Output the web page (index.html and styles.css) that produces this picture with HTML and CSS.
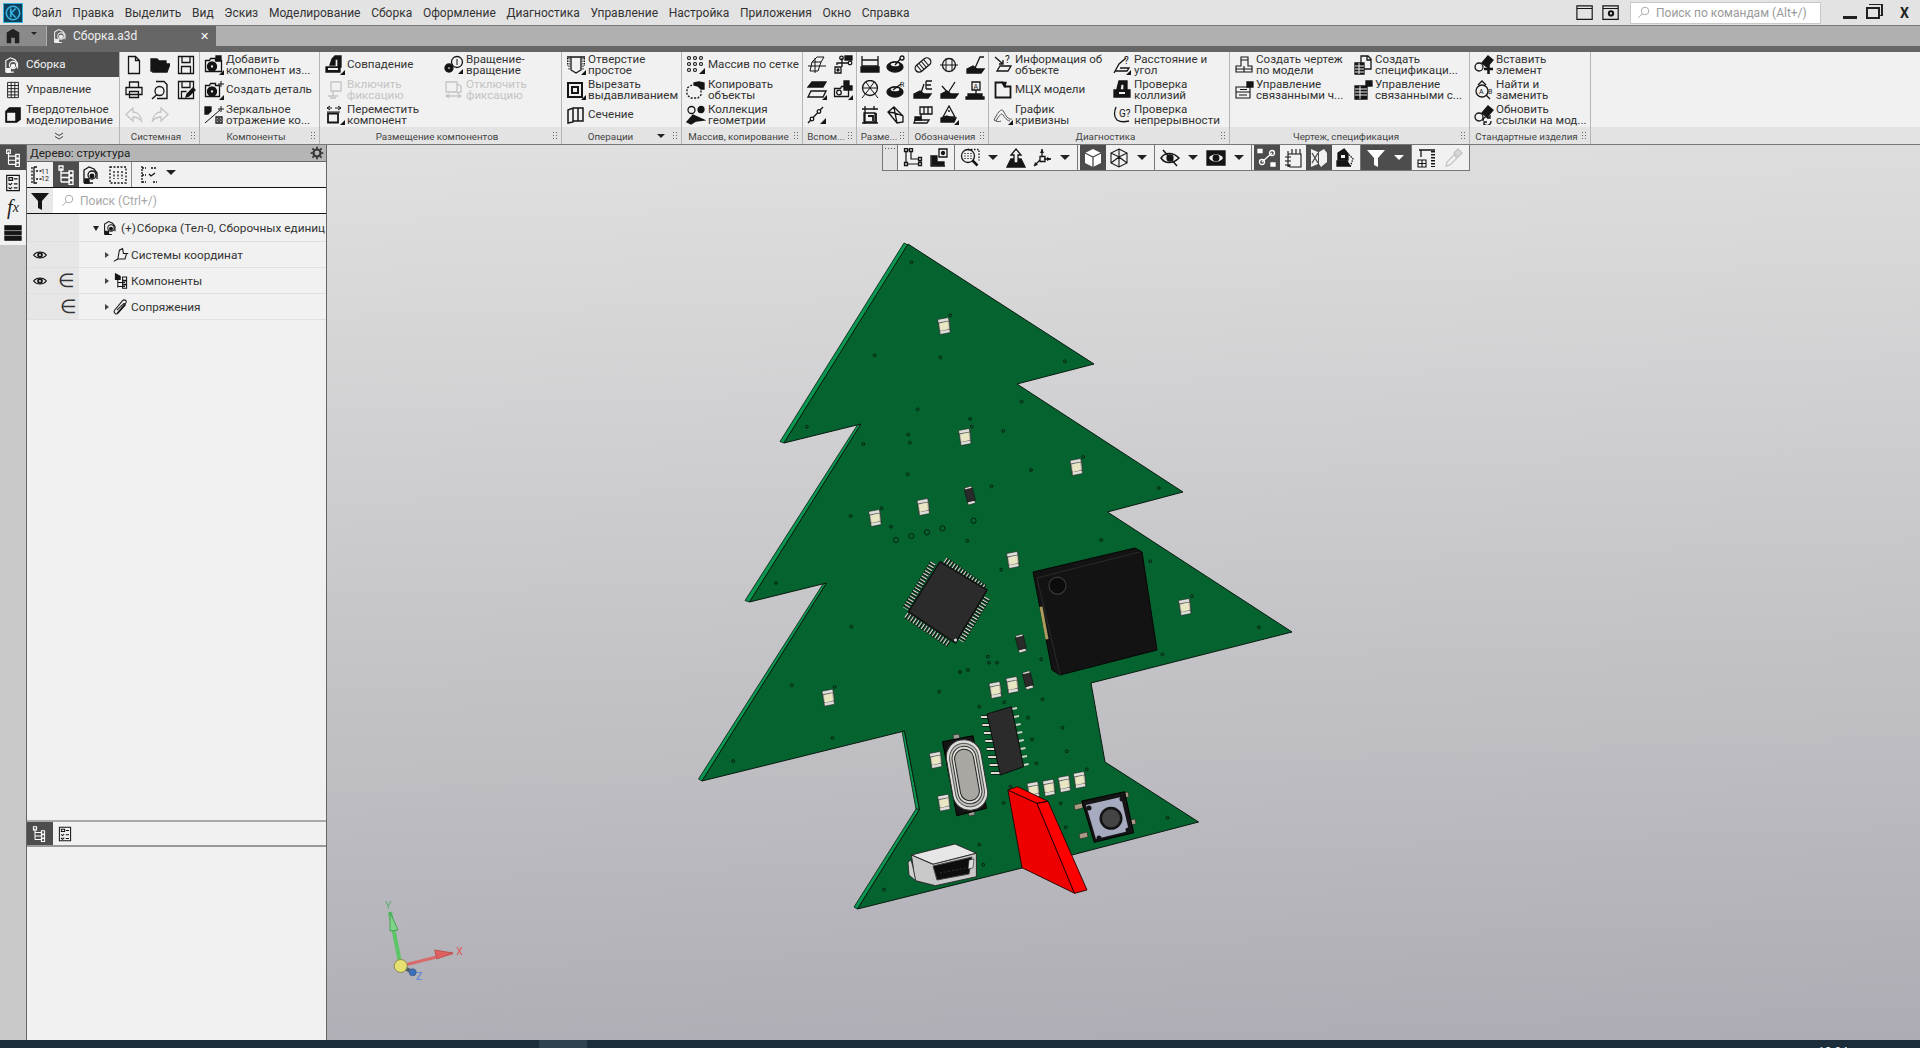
FILE: index.html
```html
<!DOCTYPE html>
<html lang="ru">
<head>
  <meta charset="UTF-8">
  <title>Сборка.a3d</title>
  <link rel="stylesheet" href="styles.css">
</head>
<body>
  <svg class="sprite" width="0" height="0">
    <symbol id="i-new" viewBox="0 0 20 20"><path d="M4.5 1.5h7l4 4v13h-11zM11.5 1.5v4h4"/></symbol>
    <symbol id="i-open" viewBox="0 0 20 20"><path class="f" d="M1 4h6l2 2h7v2H6l-3 8H1zM6 9h14l-3 8H3z"/></symbol>
    <symbol id="i-save" viewBox="0 0 20 20"><path d="M2.5 1.5h15v17h-15zM6 1.5v6h8v-6M5.5 18.5v-7h9v7"/></symbol>
    <symbol id="i-print" viewBox="0 0 20 20"><path d="M5.500 7V2h9v5M2 7.500h16v7H2zM5.500 11.500h9v6h-9z"/></symbol>
    <symbol id="i-preview" viewBox="0 0 20 20"><path d="M6 1.500h8l3 3v14H7M2 19l5-4.500" stroke-width="1.400"/><circle cx="9.500" cy="11" r="4.500"/></symbol>
    <symbol id="i-saveas" viewBox="0 0 20 20"><path d="M2.500 1.500h15v17h-15zM6 1.500v6h8v-6M5.500 18.500v-7h5"/><path class="f" d="M10 17l1-3 6-6 2 2-6 6z"/></symbol>
    <symbol id="i-undo" viewBox="0 0 20 20"><path class="g" d="M9 3L2 9.500 9 16v-4c4 0 6 1 8.500 4-.5-5-3.500-9-8.500-9z"/></symbol>
    <symbol id="i-redo" viewBox="0 0 20 20"><path class="g" d="M11 3l7 6.500-7 6.500v-4c-4 0-6 1-8.500 4 .5-5 3.500-9 8.500-9z"/></symbol>

    <symbol id="i-add" viewBox="0 0 20 20"><path d="M1.500 5.500h4l1-2h5v2h6v11h-16z"/><path class="f" d="M12 1h5v5h-5z"/><circle class="f" cx="8" cy="11.500" r="4.500"/><circle class="w" cx="8" cy="11.500" r="1.800"/><path class="f s" d="M15 20l5-5v5z"/></symbol>
    <symbol id="i-part" viewBox="0 0 20 20"><path d="M1.500 5.500h4l1-2h5v2h4v11h-14z"/><path class="l" d="M17 1v6M14 4h6"/><circle class="f" cx="8" cy="11.500" r="4.500"/><circle class="w" cx="8" cy="11.500" r="1.800"/><path class="f s" d="M15 20l5-5v5z"/></symbol>
    <symbol id="i-mirror" viewBox="0 0 20 20"><path class="l" d="M1 18L16 5M17 1v6M14 4h6"/><path class="f" d="M1 2h6v4l-3 3H1z"/><path d="M12 12h6v6h-6z"/><circle cx="15" cy="15" r="1.300"/></symbol>

    <symbol id="i-coin" viewBox="0 0 20 20"><path class="f" d="M7 4l3-3h6v11h-3V4h-3v6H5zM1 12h14v5H1z"/><path class="w s" d="M3 13h10v2H3z"/><path class="f s" d="M15 20l5-5v5z"/></symbol>
    <symbol id="i-fixon" viewBox="0 0 20 20"><path class="g" d="M6 2h10v9H6zM8 11v5M3 16h10M5 18h6"/></symbol>
    <symbol id="i-fixoff" viewBox="0 0 20 20"><path class="g" d="M2 2h11v10H2zM13 4l4 2v6l-4 1M2 16h15M5 14l-3 2 3 2M14 14l3 2-3 2"/></symbol>
    <symbol id="i-move" viewBox="0 0 20 20"><path class="l" d="M2 3h5M5 1L2 3l3 2M10 3h6M13 1l3 2-3 2M2 7h13"/><path d="M3 8.500h10v9H3z" stroke-width="1.800"/><path class="f s" d="M15 20l5-5v5z"/></symbol>
    <symbol id="i-rot" viewBox="0 0 20 20"><circle cx="13" cy="7" r="5.500"/><path class="l" d="M13 4v6"/><circle class="f" cx="5" cy="13" r="4"/><circle class="w" cx="5" cy="13" r="1.500"/><path class="f s" d="M14 19l5-5v5z"/></symbol>

    <symbol id="i-hole" viewBox="0 0 20 20"><path d="M1 2h18M5 2v13l5 3 5-3V2"/><path class="l" stroke-dasharray="1.500 1" d="M3 3v12M17 3v12M1.500 3v8M18.500 3v8" stroke-width="1.800"/><path class="f s" d="M15 20l5-5v5z"/></symbol>
    <symbol id="i-cut" viewBox="0 0 20 20"><path d="M2 3h14v14H2z" stroke-width="2"/><path d="M6 7h6v6H6z" stroke-width="2"/><path class="f s" d="M15 20l5-5v5z"/></symbol>
    <symbol id="i-sec" viewBox="0 0 20 20"><path d="M2 5l5-2v14l-5 1zM7 3h10v13H7M12 3v13" stroke-width="1.500"/></symbol>
    <symbol id="i-grid" viewBox="0 0 20 20"><g stroke-width="1.100"><circle cx="3" cy="3" r="1.500"/><circle cx="9" cy="3" r="1.500"/><circle cx="15" cy="3" r="1.500"/><circle cx="3" cy="9" r="1.500"/><circle cx="9" cy="9" r="1.500"/><circle cx="15" cy="9" r="1.500"/><circle cx="3" cy="15" r="1.500"/><circle cx="9" cy="15" r="1.500"/></g><path class="f s" d="M13 19l6-6v6z"/></symbol>
    <symbol id="i-copy" viewBox="0 0 20 20"><path class="f" d="M8 3l5-1 5 1v6h-3l-3-3-4-1z"/><path stroke-dasharray="2 1.500" d="M6 5l-5 3v7l4 3h7l3-3V8"/></symbol>
    <symbol id="i-coll" viewBox="0 0 20 20"><circle cx="5.500" cy="5" r="3.500"/><circle class="f" cx="15" cy="4.500" r="3"/><path class="f" d="M1 17l6-7 11 5-8 1-5 3z"/></symbol>
    <symbol id="i-cs" viewBox="0 0 20 20"><path d="M3 16l2-9h9l-3 9zM8 3v15M1 11h18M5 7l5-5h7l-3 5" stroke-width="1"/></symbol>
    <symbol id="i-pts" viewBox="0 0 20 20"><path d="M9 3v5h7M4 10V8h5M9 8v4"/><circle cx="8.500" cy="3" r="1.800"/><circle cx="17" cy="8" r="1.800"/><path class="f" d="M12 1h7v4h-7z"/><path d="M2 12h6v6H2z"/><circle class="f" cx="5" cy="15" r="1"/></symbol>
    <symbol id="i-pl2" viewBox="0 0 20 20"><path class="f" d="M5 2h14l-3 5H1z"/><path d="M4 11h15l-3 6H1z"/><path class="f s" d="M15 20l5-5v5z"/></symbol>
    <symbol id="i-cam" viewBox="0 0 20 20"><path d="M1.500 8.500h6l1-2h7v10h-14z"/><circle cx="6" cy="12.500" r="2.300"/><path class="f" d="M11 1h5v5h3v4h-8z"/><path class="f s" d="M15 20l5-5v5z"/></symbol>
    <symbol id="i-ln" viewBox="0 0 20 20"><path d="M1 18L16 2"/><circle class="w" cx="5" cy="14" r="1.800"/><circle class="w" cx="12" cy="6.500" r="1.800"/><path class="f s" d="M13 19l6-6v6z"/></symbol>

    <symbol id="i-d1" viewBox="0 0 20 20"><path d="M2 1v13M18 1v13M2 5h16M2 11h16"/><path class="f" d="M1 12h18v5H1z"/></symbol>
    <symbol id="i-d2" viewBox="0 0 20 20"><ellipse class="f" cx="9" cy="12" rx="8" ry="5"/><ellipse class="w" cx="9" cy="9.500" rx="5" ry="2.500"/><path d="M9 10l7-8"/><circle class="w" cx="16" cy="3" r="2"/></symbol>
    <symbol id="i-d3" viewBox="0 0 20 20"><circle cx="10" cy="8" r="7.500"/><path class="l" d="M2 8h16M10 8L2 18M10 8l8 10M6 2l4 6 4-6" stroke-width="1.500"/></symbol>
    <symbol id="i-d5" viewBox="0 0 20 20"><path d="M5 1v18M14 1v4M2 4h16M2 18h16M4 8h11v9H4z"/><path d="M8 11h5v5M16 8v10" stroke-width="1.800"/></symbol>
    <symbol id="i-d6" viewBox="0 0 20 20"><path d="M2 7l6-5 9 9v6l-6 1zM8 2l1 6 8 3M2 7l7 1M11 18L9 8"/></symbol>

    <symbol id="i-n1" viewBox="0 0 20 20"><g transform="rotate(-40 10 10)"><rect x="1" y="6" width="18" height="8" rx="4"/><path class="l" d="M5 6v8M8 6v8M11 6v8M14 6v8"/></g></symbol>
    <symbol id="i-n2" viewBox="0 0 20 20"><circle cx="10" cy="10" r="6.500"/><path class="l" d="M7 3.500v13M13 3.500v13M1 10h18"/></symbol>
    <symbol id="i-n3" viewBox="0 0 20 20"><path d="M10 13l5-11h4"/><path class="f" d="M2 14l6-3 4 3h7l-3 4H2z"/></symbol>
    <symbol id="i-n4" viewBox="0 0 20 20"><path d="M8 13l3-9M13 1v8M13 1h6M13 5h5M13 9h6"/><path class="f" d="M1 14l6-3 4 3h7l-3 4H1z"/></symbol>
    <symbol id="i-n5" viewBox="0 0 20 20"><path d="M3 6l6 7 7-11"/><path class="f" d="M2 14l6-3 4 3h7l-3 4H2z"/></symbol>
    <symbol id="i-n7" viewBox="0 0 20 20"><path d="M7 2h12v7H7zM11 2v7M15 2v7M8 9v6M2 15h14l-2 3H1z"/><path class="f" d="M2 12h6v3H2z"/></symbol>
    <symbol id="i-n8" viewBox="0 0 20 20"><path d="M10 1L4 12h12zM9 6h2"/><path class="f" d="M2 13l6-2 4 2h5l-2 4H2z"/><path class="f s" d="M15 20l5-5v5z"/></symbol>

    <symbol id="i-mch" viewBox="0 0 20 20"><path d="M2.500 2.500h7l2 4h6v11h-15z" stroke-width="1.800"/><path class="f" d="M9 2.500h4l-1 4z"/></symbol>
    <symbol id="i-cls" viewBox="0 0 20 20"><path class="f" d="M5 9l2-8h8v9h-3V4H9l-1 6zM2 10h16v7H2z"/><path class="w s" d="M7 12h6v2H7z"/></symbol>
    <symbol id="i-crv" viewBox="0 0 20 20"><path class="gd" d="M1 15c4-8 6-10 8-10s3 6 6 8 3 1 4 1M3 16c3-6 5-7 6-7s4 7 8 7M1 15c3 2 5 2 7 1"/><path class="f s" d="M15 20l5-5v5z"/></symbol>
    <symbol id="i-draw" viewBox="0 0 20 20"><path d="M7 2h7v9h4v6H2v-6h5zM2 14h16M7 5h7M10 11v6" stroke-width="1.100"/></symbol>
    <symbol id="i-mng" viewBox="0 0 20 20"><path d="M2 7h14v11H2zM2 12h14M6 9.500h7M5 15h8" stroke-width="1.100"/><path class="f" d="M13 2h6v5h-6z"/></symbol>
    <symbol id="i-spec" viewBox="0 0 20 20"><path d="M8 1h7l3 3v10H8zM14 1v4h4"/><path class="f" d="M2 8h9v11H2z"/><path class="wl" d="M2 11h9M2 14h9M2 17h9M6 8v11"/></symbol>
    <symbol id="i-spec2" viewBox="0 0 20 20"><path class="f" d="M2 6h12v13H2z"/><path class="wl" d="M2 9h12M2 12h12M2 15h12M7 6v13"/><path class="f" d="M13 1h6v5h-6z"/></symbol>
    <symbol id="i-ins" viewBox="0 0 20 20"><path class="f" d="M8 8l6-7 5 4-6 7z"/><circle cx="5" cy="12" r="4"/><path d="M10 14h9M14.500 10v9" stroke-width="2.500"/></symbol>
    <symbol id="i-upd" viewBox="0 0 20 20"><path class="f" d="M8 8l6-7 5 4-6 7z"/><circle cx="5" cy="12" r="4"/><path d="M9 16a4 4 0 0 1 7-3M17 16a4 4 0 0 1-7 3M16 10v3h-3M10 20v-3h3"/></symbol>

    <symbol id="i-sk" viewBox="0 0 20 20"><path d="M3 2v14h14v-5H8V2z" stroke-width="1.200"/><path class="w" d="M1.500 .5h3v3h-3zM6.500 .5h3v3h-3zM1.500 14.500h3v3h-3zM15.500 14.500h3v3h-3zM15.500 9.500h3v3h-3z"/></symbol>
    <symbol id="i-sk2" viewBox="0 0 20 20"><path d="M2 7v11h14"/><path class="f" d="M3 8h5v6h7v3H3z"/><path d="M10 1h8v8h-8z"/><circle class="f" cx="14" cy="5" r="1.500"/></symbol>
    <symbol id="i-zoom" viewBox="0 0 20 20"><circle cx="8" cy="8" r="6.500"/><path d="M12.500 12.500l5 5" stroke-width="2.500"/><path stroke-dasharray="1.500 1.500" d="M8 1.500h11v11"/><path stroke-dasharray="1 1.500" d="M5 5v6M8 5v6M11 5v6"/></symbol>
    <symbol id="i-up" viewBox="0 0 20 20"><path class="f" d="M5 11h10l4 8H1z"/><path class="w" d="M10 1l5 6h-3v8H8V7H5z"/></symbol>
    <symbol id="i-axes" viewBox="0 0 20 20"><path d="M10 1v8M2 18l6-6M12 11h7"/><path class="f s" d="M10 1L8 5h4zM19 11l-4-2v4zM2 18l4-1-3-3z"/><path d="M8 8.500h5v5H8z"/></symbol>
    <symbol id="i-cube" viewBox="0 0 20 20"><path class="wf s" d="M10 1l8 4v10l-8 4-8-4V5z"/><path class="da" d="M2 5l8 4 8-4M10 9v10"/></symbol>
    <symbol id="i-wire" viewBox="0 0 20 20"><path d="M10 1l8 4v10l-8 4-8-4V5zM2 5l8 4 8-4M10 9v10M10 1v8M2 15l8-6 8 6" stroke-width="1.100"/></symbol>
    <symbol id="i-eyex" viewBox="0 0 20 20"><path d="M1 10c4-6 12-6 18 0-6 6-14 6-18 0z" stroke-width="1.500"/><circle class="f" cx="10" cy="10" r="3"/><path d="M3 2l14 16" stroke-width="1.500"/></symbol>
    <symbol id="i-eyeb" viewBox="0 0 20 20"><path class="f" d="M1 3h18v14H1z"/><path class="w s" d="M3 10c3-5 11-5 14 0-3 5-11 5-14 0z"/><circle class="f" cx="10" cy="10" r="2.800"/></symbol>
    <symbol id="i-nodes" viewBox="0 0 20 20"><path d="M5 14L15 5"/><circle cx="15" cy="5" r="2.500"/><circle cx="5" cy="14" r="2.500"/><path class="f" d="M1 1.500h4v3H1zM14 15h4v3h-4z"/></symbol>
    <symbol id="i-cal" viewBox="0 0 20 20"><path d="M5 6h13v13H7l-2-2zM5 3v3M9 1v5M13 1v5M17 1v5M2 9h6M2 13h6M2 17h6M5 7v12" stroke-width="1.100"/></symbol>
    <symbol id="i-seg" viewBox="0 0 20 20"><path class="w s" d="M2 1l7 3v12l-7 3zM10 4l5-3 3 4v9l-6 5-2-3z"/><path class="da" d="M3 5l6 10M9 5l-6 10"/></symbol>
    <symbol id="i-seg2" viewBox="0 0 20 20"><path class="f" d="M3 5l6-4 4 5v6H3z"/><path class="f" d="M2 13h10l3 5H2z"/><path class="w s" d="M6 7h4v3H6z"/><path stroke-dasharray="1.500 1" d="M9 1l9 10-3 8"/></symbol>
    <symbol id="i-funnel" viewBox="0 0 20 20"><path class="f s" d="M1 2h18l-7 8v9l-4-2v-7z"/></symbol>
    <symbol id="i-crane" viewBox="0 0 20 20"><path d="M2 2h16M4 2v7"/><path stroke-dasharray="1.500 1.500" d="M16 3v16" stroke-width="4"/><path d="M1 12h8v7H1zM1 15.500h8M5 12v7" stroke-width="1.100"/></symbol>
    <symbol id="i-pip" viewBox="0 0 20 20"><path class="g" d="M3 18l1-4 7-7 3 3-7 7z"/><path class="gf" d="M11 5l4-4 4 4-4 4z"/></symbol>

    <symbol id="i-tree" viewBox="0 0 20 20"><path d="M5 3v14M5 8h9M5 12.500h9M5 17h9"/><path d="M3 1h4v4H3zM13 6h4v4h-4zM13 11h4v4h-4zM13 15.500h4v4h-4z"/></symbol>
    <symbol id="i-list" viewBox="0 0 20 20"><path d="M3 1.500h14v17H3zM5.500 4h4v3h-4zM11 5.500h4M5 10.500l2 1.500 2-2M11 11h4M5 15l2 1.500 2-2M11 15.500h4"/></symbol>
    <symbol id="i-doc" viewBox="0 0 20 20"><path d="M4 1.500h12v17H4zM4 5h12M4 8.500h12M4 12h12M4 15.500h12M8 1.500v17M12 1.500v17" stroke-width="1"/></symbol>
    <symbol id="i-solid" viewBox="0 0 20 20"><path class="f" d="M2 6l4-4h12v13l-4 3H2z"/><path class="w s" d="M3.500 7.500h9V16.500h-9z"/></symbol>
    <symbol id="i-asm" viewBox="0 0 20 20"><path d="M2 18V5l5-3 5 2 3 4v6M2 18h9"/><circle cx="10" cy="10" r="4"/><circle class="f" cx="10" cy="11" r="1.800"/><path class="f" d="M3 14h4v4H3z"/></symbol>
    <symbol id="i-sel" viewBox="0 0 20 20"><path stroke-dasharray="2 1.500" d="M2 2h16v16H2zM6 6v8M10 6v8M14 6v8"/></symbol>
    <symbol id="i-chk" viewBox="0 0 20 20"><path stroke-dasharray="2 1" d="M3 1v18M3 3h4M3 10h4M3 17h4M12 3h6M14 17h4"/><path d="M10 9l2 2 4-3"/></symbol>
    <symbol id="i-csys" viewBox="0 0 20 20"><path d="M1 18l5-3M6 15L8 4l4-2 1 6h6M6 15h9l2-7"/></symbol>
    <symbol id="i-comps" viewBox="0 0 20 20"><path class="f" d="M3 1l6 3v4H3z"/><path d="M6 8v10M6 12h9M6 17h9"/><path d="M12 5h5v4h-5zM12 10h5v4h-5zM12 15h5v4h-5z"/></symbol>
    <symbol id="i-clip" viewBox="0 0 20 20"><path d="M5 18L16 5c2-3-2-5-4-3L2 14c-2 3 2 6 4 4l9-10c1-2-1-3-2-2L5 14"/></symbol>
    <symbol id="i-eye" viewBox="0 0 20 20"><path d="M2 10c4-5 12-5 16 0-4 5-12 5-16 0z" stroke-width="1.500"/><circle class="f s" cx="10" cy="10" r="3.500"/><circle class="w s" cx="10" cy="10" r="1.200"/></symbol>
    <symbol id="i-gear" viewBox="0 0 20 20"><circle cx="10" cy="10" r="5" stroke-width="3"/><path stroke-width="2.500" d="M10 1v3M10 16v3M1 10h3M16 10h3M3.500 3.500l2 2M14.500 14.500l2 2M16.500 3.500l-2 2M5.500 14.500l-2 2"/></symbol>
    <symbol id="i-stack" viewBox="0 0 20 20"><path class="f" d="M1 2h18v4H1zM1 8h18v4H1zM1 14h18v4H1z"/></symbol>
    <symbol id="i-home" viewBox="0 0 20 20"><path class="f s" d="M3 18V6l7-4 7 4v12h-5v-6H8v6z"/></symbol>
    <symbol id="i-search" viewBox="0 0 20 20"><circle cx="12" cy="8" r="5"/><path d="M8.500 11.500L3 17"/></symbol>
    <symbol id="i-win" viewBox="0 0 20 20"><path d="M1 2h17v15H1zM1 5h17"/></symbol>
    <symbol id="i-wins" viewBox="0 0 20 20"><path d="M1 2h17v15H1zM1 5h17"/><circle class="f s" cx="10" cy="10.500" r="3.500"/><circle class="w s" cx="10" cy="10.500" r="1.200"/></symbol>
  </svg>

  <header class="menubar">
    <div class="logo"><svg viewBox="0 0 20 20"><circle cx="10" cy="10" r="7.500"/><path d="M7.500 5v10M13 5l-5 5 5 5"/></svg></div>
    <nav class="menu">
      <a>Файл</a><a>Правка</a><a>Выделить</a><a>Вид</a><a>Эскиз</a><a>Моделирование</a><a>Сборка</a><a>Оформление</a><a>Диагностика</a><a>Управление</a><a>Настройка</a><a>Приложения</a><a>Окно</a><a>Справка</a>
    </nav>
    <div class="win-tools">
      <svg class="ic ic-win"><use href="#i-win"/></svg>
      <svg class="ic ic-win"><use href="#i-wins"/></svg>
      <div class="cmd-search"><svg class="ic ic-s"><use href="#i-search"/></svg>Поиск по командам (Alt+/)</div>
      <div class="win-btns">
        <span class="w-min"></span>
        <span class="w-max"></span>
        <span class="w-close">X</span>
      </div>
    </div>
  </header>

  <div class="tabbar">
    <div class="home"><svg class="ic ic-home"><use href="#i-home"/></svg><span class="arrow arrow-sm"></span></div>
    <div class="doc-tab"><svg class="ic ic-tab"><use href="#i-asm"/></svg><span class="doc-name">Сборка.a3d</span><span class="doc-x">✕</span></div>
  </div>
  <div class="strip"></div>

  <section class="ribbon">
    <div class="group g-mode">
      <div class="modes">
        <div class="mode active"><svg class="ic"><use href="#i-asm"/></svg>Сборка</div>
        <div class="mode"><svg class="ic"><use href="#i-doc"/></svg>Управление</div>
        <div class="mode"><svg class="ic"><use href="#i-solid"/></svg><span>Твердотельное<br>моделирование</span></div>
      </div>
      <div class="group-label expand"><svg class="chev" viewBox="0 0 10 8"><path d="M1 1l4 2.500L9 1M1 4.500L5 7l4-2.500"/></svg></div>
    </div>

    <div class="group g-sys">
      <div class="group-body icons cols3">
        <i><svg class="ic"><use href="#i-new"/></svg></i><i><svg class="ic"><use href="#i-open"/></svg></i><i><svg class="ic"><use href="#i-save"/></svg></i>
        <i><svg class="ic"><use href="#i-print"/></svg></i><i><svg class="ic"><use href="#i-preview"/></svg></i><i><svg class="ic"><use href="#i-saveas"/></svg></i>
        <i><svg class="ic"><use href="#i-undo"/></svg></i><i><svg class="ic"><use href="#i-redo"/></svg></i>
      </div>
      <div class="group-label"><span>Системная</span><b class="grip"></b></div>
    </div>

    <div class="group g-comp">
      <div class="group-body">
        <div class="btn"><svg class="ic"><use href="#i-add"/></svg><span>Добавить<br>компонент из...</span></div>
        <div class="btn"><svg class="ic"><use href="#i-part"/></svg><span>Создать деталь</span></div>
        <div class="btn"><svg class="ic"><use href="#i-mirror"/></svg><span>Зеркальное<br>отражение ко...</span></div>
      </div>
      <div class="group-label"><span>Компоненты</span><b class="grip"></b></div>
    </div>

    <div class="group g-place">
      <div class="group-body cols2">
        <div class="btn"><svg class="ic"><use href="#i-coin"/></svg><span>Совпадение</span></div>
        <div class="btn"><svg class="ic"><use href="#i-rot"/></svg><span>Вращение-<br>вращение</span></div>
        <div class="btn off"><svg class="ic"><use href="#i-fixon"/></svg><span>Включить<br>фиксацию</span></div>
        <div class="btn off"><svg class="ic"><use href="#i-fixoff"/></svg><span>Отключить<br>фиксацию</span></div>
        <div class="btn"><svg class="ic"><use href="#i-move"/></svg><span>Переместить<br>компонент</span></div>
      </div>
      <div class="group-label"><span>Размещение компонентов</span><b class="grip"></b></div>
    </div>

    <div class="group g-ops">
      <div class="group-body">
        <div class="btn"><svg class="ic"><use href="#i-hole"/></svg><span>Отверстие<br>простое</span></div>
        <div class="btn"><svg class="ic"><use href="#i-cut"/></svg><span>Вырезать<br>выдавливанием</span></div>
        <div class="btn"><svg class="ic"><use href="#i-sec"/></svg><span>Сечение</span></div>
      </div>
      <div class="group-label"><span>Операции</span><em class="arrow arrow-lb"></em><b class="grip"></b></div>
    </div>

    <div class="group g-arr">
      <div class="group-body">
        <div class="btn"><svg class="ic"><use href="#i-grid"/></svg><span>Массив по сетке</span></div>
        <div class="btn"><svg class="ic"><use href="#i-copy"/></svg><span>Копировать<br>объекты</span></div>
        <div class="btn"><svg class="ic"><use href="#i-coll"/></svg><span>Коллекция<br>геометрии</span></div>
      </div>
      <div class="group-label"><span>Массив, копирование</span><b class="grip"></b></div>
    </div>

    <div class="group g-aux">
      <div class="group-body icons cols-2">
        <i><svg class="ic"><use href="#i-cs"/></svg></i><i><svg class="ic"><use href="#i-pts"/></svg></i>
        <i><svg class="ic"><use href="#i-pl2"/></svg></i><i><svg class="ic"><use href="#i-cam"/></svg></i>
        <i><svg class="ic"><use href="#i-ln"/></svg></i>
      </div>
      <div class="group-label"><span>Вспом...</span><b class="grip"></b></div>
    </div>

    <div class="group g-dim">
      <div class="group-body icons cols-2">
        <i><svg class="ic"><use href="#i-d1"/></svg></i><i><svg class="ic"><use href="#i-d2"/></svg></i>
        <i><svg class="ic"><use href="#i-d3"/></svg></i><i><svg class="ic" viewBox="0 0 20 20"><ellipse class="f" cx="9" cy="12" rx="8" ry="5"/><ellipse class="w" cx="9" cy="9.500" rx="5" ry="2.500"/><path d="M7 10l8-6"/><text x="14" y="7" class="t">R</text></svg></i>
        <i><svg class="ic"><use href="#i-d5"/></svg></i><i><svg class="ic"><use href="#i-d6"/></svg></i>
      </div>
      <div class="group-label"><span>Разме...</span><b class="grip"></b></div>
    </div>

    <div class="group g-note">
      <div class="group-body icons cols3">
        <i><svg class="ic"><use href="#i-n1"/></svg></i><i><svg class="ic"><use href="#i-n2"/></svg></i><i><svg class="ic"><use href="#i-n3"/></svg></i>
        <i><svg class="ic"><use href="#i-n4"/></svg></i><i><svg class="ic"><use href="#i-n5"/></svg></i><i><svg class="ic" viewBox="0 0 20 20"><path d="M7 2h8v8H7zM11 10v4"/><text x="8.500" y="8.500" class="t">A</text><path class="f" d="M3 14h14v2H3zM1 17h18v2H1z"/></svg></i>
        <i><svg class="ic"><use href="#i-n7"/></svg></i><i><svg class="ic"><use href="#i-n8"/></svg></i>
      </div>
      <div class="group-label"><span>Обозначения</span><b class="grip"></b></div>
    </div>

    <div class="group g-diag">
      <div class="group-body cols2">
        <div class="btn"><svg class="ic" viewBox="0 0 20 20"><path d="M2 2l8 7M6 9h4V5M4 16l3-5h11l-3 5z"/><text x="12" y="8" class="t2">?</text></svg><span>Информация об<br>объекте</span></div>
        <div class="btn"><svg class="ic" viewBox="0 0 20 20"><path d="M2 18l5-9 7-6M3 16h12l2-3H8"/><text x="12" y="9" class="t2">?</text><path class="f s" d="M14 20l5-5v5z"/></svg><span>Расстояние и<br>угол</span></div>
        <div class="btn"><svg class="ic"><use href="#i-mch"/></svg><span>МЦХ модели</span></div>
        <div class="btn"><svg class="ic"><use href="#i-cls"/></svg><span>Проверка<br>коллизий</span></div>
        <div class="btn"><svg class="ic"><use href="#i-crv"/></svg><span>График<br>кривизны</span></div>
        <div class="btn"><svg class="ic" viewBox="0 0 20 20"><path d="M4 2c-2 5-2 10 1 13 3 2 8 2 12 1"/><text x="7" y="12" class="t2">G?</text></svg><span>Проверка<br>непрерывности</span></div>
      </div>
      <div class="group-label"><span>Диагностика</span><b class="grip"></b></div>
    </div>

    <div class="group g-draw">
      <div class="group-body cols2">
        <div class="btn"><svg class="ic"><use href="#i-draw"/></svg><span>Создать чертеж<br>по модели</span></div>
        <div class="btn"><svg class="ic"><use href="#i-spec"/></svg><span>Создать<br>спецификаци...</span></div>
        <div class="btn"><svg class="ic"><use href="#i-mng"/></svg><span>Управление<br>связанными ч...</span></div>
        <div class="btn"><svg class="ic"><use href="#i-spec2"/></svg><span>Управление<br>связанными с...</span></div>
      </div>
      <div class="group-label"><span>Чертеж, спецификация</span><b class="grip"></b></div>
    </div>

    <div class="group g-std">
      <div class="group-body">
        <div class="btn"><svg class="ic"><use href="#i-ins"/></svg><span>Вставить<br>элемент</span></div>
        <div class="btn"><svg class="ic" viewBox="0 0 20 20"><circle cx="8" cy="11" r="6"/><path d="M12 15l4 4M4 5l4-4 4 4"/><text x="5" y="14" class="t">A</text><text x="14" y="14" class="t">B</text></svg><span>Найти и<br>заменить</span></div>
        <div class="btn"><svg class="ic"><use href="#i-upd"/></svg><span>Обновить<br>ссылки на мод...</span></div>
      </div>
      <div class="group-label"><span>Стандартные изделия</span><b class="grip"></b></div>
    </div>

    <div class="group g-rest">
      <div class="group-body"></div>
      <div class="group-label"></div>
    </div>
  </section>

  <div class="work">
    <aside class="side">
      <div class="side-tabs">
        <i class="on"><svg class="ic"><use href="#i-tree"/></svg></i>
        <i><svg class="ic"><use href="#i-list"/></svg></i>
        <i class="fx">f<small>x</small></i>
        <i><svg class="ic"><use href="#i-stack"/></svg></i>
      </div>
    </aside>

    <section class="panel">
      <div class="panel-head"><span>Дерево: структура</span><svg class="ic ic-gear"><use href="#i-gear"/></svg></div>
      <div class="panel-tools">
        <i><svg class="ic" viewBox="0 0 20 20"><path d="M4 2h3M4 2v16h3"/><path stroke-dasharray="2 1.500" d="M6 6h6M6 14h6M2 2v16"/><text x="11" y="9" class="t">11</text><text x="11" y="16" class="t">12</text></svg></i>
        <i class="on"><svg class="ic"><use href="#i-tree"/></svg></i>
        <i><svg class="ic"><use href="#i-asm"/></svg></i>
        <i class="sep"><svg class="ic"><use href="#i-sel"/></svg></i>
        <i class="wide"><svg class="ic"><use href="#i-chk"/></svg></i>
        <span class="arrow"></span>
      </div>
      <div class="panel-search">
        <i><svg class="ic"><use href="#i-funnel"/></svg></i>
        <div class="search-box"><svg class="ic ic-s"><use href="#i-search"/></svg>Поиск (Ctrl+/)</div>
      </div>
      <div class="tree">
        <div class="row first">
          <div class="cols"></div>
          <div class="cell lvl0"><span class="tw open"></span><svg class="ic ic-t"><use href="#i-asm"/></svg><span class="plus">(+)</span>Сборка (Тел-0, Сборочных единиц</div>
        </div>
        <div class="row">
          <div class="cols"><svg class="ic ic-t"><use href="#i-eye"/></svg></div>
          <div class="cell"><span class="tw"></span><svg class="ic ic-t"><use href="#i-csys"/></svg>Системы координат</div>
        </div>
        <div class="row">
          <div class="cols"><svg class="ic ic-t"><use href="#i-eye"/></svg><span class="elem">∈</span></div>
          <div class="cell"><span class="tw"></span><svg class="ic ic-t"><use href="#i-comps"/></svg>Компоненты</div>
        </div>
        <div class="row">
          <div class="cols right"><span class="elem">∈</span></div>
          <div class="cell"><span class="tw"></span><svg class="ic ic-t"><use href="#i-clip"/></svg>Сопряжения</div>
        </div>
      </div>
      <div class="panel-tabs">
        <i class="on"><svg class="ic ic-t"><use href="#i-tree"/></svg></i>
        <i><svg class="ic ic-t"><use href="#i-list"/></svg></i>
      </div>
      <div class="panel-lower"></div>
    </section>

    <main class="view">
      <div class="float-bar">
        <span class="float-grip"></span>
        <div class="seg">
          <i><svg class="ic"><use href="#i-sk"/></svg></i><i><svg class="ic"><use href="#i-sk2"/></svg></i>
        </div>
        <div class="seg">
          <i><svg class="ic"><use href="#i-zoom"/></svg></i><span class="arrow"></span><i><svg class="ic"><use href="#i-up"/></svg></i><i><svg class="ic"><use href="#i-axes"/></svg></i><span class="arrow"></span>
        </div>
        <div class="seg">
          <i class="on"><svg class="ic"><use href="#i-cube"/></svg></i><i><svg class="ic"><use href="#i-wire"/></svg></i><span class="arrow"></span>
        </div>
        <div class="seg">
          <i><svg class="ic"><use href="#i-eyex"/></svg></i><span class="arrow"></span><i><svg class="ic"><use href="#i-eyeb"/></svg></i><span class="arrow"></span>
        </div>
        <div class="seg">
          <i class="on"><svg class="ic"><use href="#i-nodes"/></svg></i><i><svg class="ic"><use href="#i-cal"/></svg></i><i class="on"><svg class="ic"><use href="#i-seg"/></svg></i><i><svg class="ic"><use href="#i-seg2"/></svg></i>
        </div>
        <div class="seg seg-on">
          <i><svg class="ic"><use href="#i-funnel"/></svg></i><span class="arrow"></span>
        </div>
        <div class="seg seg-end">
          <i><svg class="ic"><use href="#i-crane"/></svg></i><i><svg class="ic"><use href="#i-pip"/></svg></i>
        </div>
      </div>

      <!-- viewBox is in page coordinates, so points read off the screen go in as they are -->
      <svg class="scene" viewBox="327 145 1593 895">
        <defs>
          <g id="led">
            <path class="led-mid" d="M-5.500-4l11-2 1 10.500L-4 6.500z"/>
            <path class="led-end" d="M-6-6.500l10.500-2 1 3.500-11 2zM-4 5l10-2 .5 3.500-10 2z"/>
            <path class="led-top" d="M-4-2.500l8-2 1 7.500-8 2z"/>
          </g>
          <g id="smd">
            <path class="led-end" d="M-5-8l7-2 1 3-7 2zM-2 6l7-2 1 3-7 2z"/>
            <path class="smd-mid" d="M-5-6l8-2 3 12-8 2z"/>
          </g>
        </defs>

        <!-- side walls of the board -->
        <g class="board-side">
          <path d="M904 243l4 2L784 443l-4-1.500z"/>
          <path d="M858 424l3 0-111.500 178-4.500-1.500z"/>
          <path d="M823 584l3.500-1L702 781l-3.500-2z"/>
          <path d="M902 731l2.500 0 15 78.500-3.500-.5z"/>
          <path d="M916 809l3.500.5L857.500 909l-3.500-2z"/>
        </g>
        <path class="board" d="M908 244L1094 364l-77 20 166 108-75.500 20L1292 632l-201 51 14 79 93.600 60-176.600 46-164.500 41 62-99.500-15-78.500L702 781l124.500-198-77 19L861 424l-77 19z"/>

        <g class="vias">
          <circle cx="911.4" cy="262.3"/><circle cx="950.2" cy="315.3"/><circle cx="874.7" cy="355.3"/><circle cx="940.4" cy="357.3"/><circle cx="1064.9" cy="361.3"/>
          <circle cx="1021.6" cy="401.7"/><circle cx="917.6" cy="409.3"/><circle cx="806.9" cy="426.7"/><circle cx="970.2" cy="419"/><circle cx="971.8" cy="426.7"/>
          <circle cx="908.2" cy="434.7"/><circle cx="909.8" cy="442.7"/><circle cx="863.3" cy="444"/><circle cx="1003.3" cy="431"/><circle cx="1083.3" cy="457"/>
          <circle cx="1031" cy="470"/><circle cx="907.8" cy="474.3"/><circle cx="991.4" cy="486.3"/><circle cx="1158.8" cy="488"/><circle cx="881.6" cy="508.3"/>
          <circle cx="850.6" cy="516"/><circle cx="891" cy="526.7"/><circle cx="967.3" cy="540.7"/><circle cx="1101.2" cy="540"/><circle cx="1001.2" cy="569.7"/>
          <circle cx="1150.2" cy="561.3"/><circle cx="776" cy="583"/><circle cx="851.4" cy="626.7"/><circle cx="1191.8" cy="596.3"/><circle cx="1258.8" cy="627.3"/>
          <circle cx="987.8" cy="656.7"/><circle cx="1162.4" cy="654.3"/><circle cx="1041.2" cy="659.3"/><circle cx="791.8" cy="685.3"/><circle cx="834.6" cy="687"/>
          <circle cx="939.3" cy="691.7"/><circle cx="960" cy="672"/><circle cx="967.9" cy="670"/><circle cx="989" cy="662.7"/><circle cx="997" cy="662.7"/>
          <circle cx="979.3" cy="706.7"/><circle cx="1004.3" cy="702.3"/><circle cx="1042.5" cy="699.3"/><circle cx="1027.9" cy="717.7"/><circle cx="1062.5" cy="727.7"/>
          <circle cx="1032" cy="739.3"/><circle cx="1066.8" cy="751.3"/><circle cx="1036.4" cy="763.3"/><circle cx="1086.8" cy="769.3"/><circle cx="832.5" cy="738"/>
          <circle cx="733.2" cy="761"/><circle cx="1060.7" cy="803.3"/><circle cx="1003.6" cy="803"/><circle cx="1065.7" cy="827.3"/><circle cx="1167.5" cy="817.7"/>
          <circle cx="979.3" cy="844.7"/><circle cx="983.2" cy="864.7"/><circle cx="883.9" cy="889.7"/><circle cx="1010.4" cy="786.7"/>
          <circle class="big" cx="896" cy="540"/><circle class="big" cx="911.4" cy="536"/><circle class="big" cx="927" cy="532.3"/><circle class="big" cx="942.4" cy="528.3"/><circle class="big" cx="973.5" cy="520.7"/>
        </g>

        <use href="#led" x="943.7" y="326"/><use href="#led" x="964.5" y="437"/><use href="#led" x="1076" y="467"/><use href="#led" x="923" y="507"/>
        <use href="#led" x="874.7" y="518"/><use href="#led" x="1012.6" y="560"/><use href="#led" x="1184.5" y="607"/><use href="#led" x="828" y="697.7"/>
        <use href="#led" x="995" y="690"/><use href="#led" x="1012" y="685"/><use href="#led" x="935.4" y="760"/><use href="#led" x="943.6" y="802.7"/>
        <use href="#led" x="1033" y="790"/><use href="#led" x="1048.6" y="787.7"/><use href="#led" x="1064" y="784"/><use href="#led" x="1079.3" y="780"/>
        <use href="#smd" x="969.4" y="496"/><use href="#smd" x="1020.4" y="644"/><use href="#smd" x="1027.5" y="680.7"/>

        <!-- QFP -->
        <g class="pins-comb">
          <path d="M933 563L905.5 608.7M945 560L985 588.5M987 598L961 641M906 615L949 644"/>
        </g>
        <g class="pins-comb top">
          <path d="M933 563L905.5 608.7M945 560L985 588.5M987 598L961 641M906 615L949 644"/>
        </g>
        <path class="qfp" d="M940 561.7L987 590l-31.500 53-46.900-31.300z"/>
        <circle class="qfp-dot" cx="955.5" cy="640" r="1.500"/>

        <!-- module -->
        <path class="mod" d="M1033 572l102-24 7 4 15 98-97 25-8-5z"/>
        <path class="mod-line" d="M1037 578l102-26M1037 578l23 97"/>
        <circle class="mod-hole" cx="1057.5" cy="585.7" r="8.500"/>
        <path class="mod-gold" d="M1041 606.7l6 32.600"/>

        <!-- SOIC -->
        <path class="soic-pins" d="M981 717h10M982.4 725h10M983.9 733h10M985.3 741h10M986.700 749h10M988.100 757h10M989.600 765h10M991 773h10"/>
        <path class="soic-pins inner" d="M981 717h10M982.4 725h10M983.9 733h10M985.3 741h10M986.700 749h10M988.100 757h10M989.600 765h10M991 773h10"/>
        <path class="soic-pins small" d="M1012 709l5-1M1014 717l5-1M1015.6 725l5-1M1017.2 733l5-1M1018.8 741l5-1M1020.4 749l5-1M1022 757l5-1M1023.6 765l5-1"/>
        <path class="soic" d="M987 714l24.400-7.300 12.200 60L1000.400 775z"/>
        <path class="mod-line" d="M991 712l13 62"/>

        <!-- crystal -->
        <path class="xt-tab" d="M953 735l6-1 1 5-6 1zM968 810l6-1 1 6-6 1z"/>
        <path class="xt-base" d="M942.5 741.7l30.500-6 13.400 72.600-29.600 7.400z"/>
        <g transform="rotate(-10 966.8 775)">
          <rect class="xt-a" x="949.5" y="739.5" width="35" height="71" rx="17"/>
          <rect class="xt-b" x="952.5" y="743" width="29" height="64" rx="14.500"/>
          <rect class="xt-a" x="955" y="746" width="24" height="58" rx="12"/>
          <rect class="xt-c" x="957.5" y="749" width="19" height="52" rx="9.500"/>
        </g>

        <!-- button -->
        <path class="tan" d="M1074 805l8-2 1 5-8 2zM1079 834l8-2 1 5-8 2zM1122 793l6-1 1 5-6 1zM1130 820l5-1 1 5-5 1z"/>
        <path class="sw" d="M1081.8 801l42.800-9.300 9 41-39.300 9.600z"/>
        <path class="sw-top" d="M1086 805l35-8 8 34-33 8z"/>
        <circle class="sw-dot" cx="1089" cy="808" r="2.500"/><circle class="sw-dot" cx="1122" cy="799" r="2.500"/><circle class="sw-dot" cx="1099" cy="838" r="2.500"/><circle class="sw-dot" cx="1128" cy="830" r="2.500"/>
        <circle class="sw-ring" cx="1111" cy="818.3" r="11.500"/>
        <circle class="sw-knob" cx="1111" cy="818.3" r="9"/>

        <!-- usb -->
        <path class="usb-ear" d="M911 860l-3 2 1 13 7 6 20 5 3-6-24-6z"/>
        <path class="usb" d="M911.4 855l43.600-11 21.400 9.300-43 11z"/>
        <path class="usb-rim" d="M911.4 855l21.400 9.300 43.600-11v23.400l-41 9-19.700-5-2-10z"/>
        <path class="usb-in" d="M933 866l39-9-3 17-32 6z"/>
        <path class="usb-pin" d="M940 873l26-5"/>
        <path class="usb-edge" d="M969 860l5-1-1 9-5 1z"/>

        <!-- red wedge -->
        <path class="red" d="M1007.9 790l29.100 13.300 37.600 90L1022 867.700z"/>
        <path class="red lt" d="M1037 803.3l11-2 39 88.700-12.400 3.300zM1007.9 790l9.600-3.300 30.500 14.600-11 2z"/>

        <!-- axes triad -->
        <g class="triad">
          <path class="ax-y" d="M400.7 966L390 912"/>
          <path class="ax-yh" d="M390 912l8 18-8 1z"/>
          <path class="ax-x" d="M400.7 966l52-13"/>
          <path class="ax-xh" d="M452.7 953l-16 6-2-9z"/>
          <path class="ax-z" d="M402 967l11 5"/>
          <circle class="ax-o" cx="400.7" cy="966" r="6.500"/>
          <circle class="ax-zb" cx="412.7" cy="972.3" r="3.500"/>
          <text class="ax-t tx" x="456" y="955">X</text>
          <text class="ax-t ty" x="385" y="909">Y</text>
          <text class="ax-t tz" x="416" y="980">Z</text>
        </g>
      </svg>
    </main>
  </div>

  <footer class="taskbar">
    <span class="task-item"></span>
    <span class="clock">13:04</span>
  </footer>
</body>
</html>
```

FILE: styles.css
```css
* {
  box-sizing: border-box;
}

html, body {
  margin: 0;
  height: 100%;
}

body {
  display: flex;
  flex-direction: column;
  height: 1048px;
  overflow: hidden;
  font-family: Roboto, "Liberation Sans", sans-serif;
  font-size: 12px;
  color: #222;
  background: #e3e3e3;
}

.sprite {
  position: absolute;
}

i {
  font-style: normal;
}

/* icons */
.ic {
  width: 20px;
  height: 20px;
  flex: none;
  fill: none;
  stroke: currentColor;
  stroke-width: 1.3;
  color: #151515;
}

.f { fill: currentColor; }
.w { fill: #f1f1f1; }
.wf { fill: #fff; }
.s { stroke: none; }
.l { stroke-width: 1; }
.wl { stroke: #f1f1f1; stroke-width: 1; }
.da { stroke: #4a4a4a; }
.g { stroke: #c4c4c4; fill: none; }
.gf { stroke: #c4c4c4; fill: #d8d8d8; }
.gd { stroke: #555; stroke-width: 1; }
.t, .t2 {
  fill: currentColor;
  stroke: none;
  font-family: Roboto, sans-serif;
}
.t { font-size: 7px; }
.t2 { font-size: 10px; }

/* top menu */
.menubar {
  display: flex;
  align-items: center;
  height: 26px;
  flex: none;
  background: #e3e3e3;
  border-bottom: 1px solid #777;
}

.logo {
  width: 20px;
  height: 20px;
  margin: 0 0 0 3px;
  background: #0b3f5c;
  border: 1px solid #39b2dc;
}

.logo svg {
  display: block;
  fill: none;
  stroke: #39b2dc;
  stroke-width: 1.8;
}

.menu {
  display: flex;
  gap: 10.7px;
  margin-left: 9px;
}

.menu a {
  color: #333;
}

.win-tools {
  display: flex;
  align-items: center;
  margin-left: auto;
}

.ic-win {
  width: 18px;
  height: 18px;
  margin-right: 8px;
}

.cmd-search {
  display: flex;
  align-items: center;
  width: 191px;
  height: 22px;
  margin-left: 2px;
  padding-left: 5px;
  background: #fff;
  border: 1px solid #c8c8c8;
  color: #9a9a9a;
}

.ic-s {
  width: 15px;
  height: 15px;
  margin-right: 5px;
  color: #aaa;
}

.win-btns {
  display: flex;
  align-items: center;
  width: 99px;
  padding-left: 22px;
}

.w-min {
  width: 14px;
  height: 3px;
  margin-top: 9px;
  background: #222;
}

.w-max {
  width: 14px;
  height: 12px;
  margin-left: 9px;
  border: 2px solid #222;
  box-shadow: 2px -3px 0 -1px #e3e3e3, 3px -3px 0 0 #222;
}

.w-close {
  margin-left: 20px;
  font-weight: 700;
  font-size: 14px;
  color: #222;
}

/* document tabs */
.tabbar {
  display: flex;
  height: 20px;
  flex: none;
  background: #b0b0b0;
}

.home {
  display: flex;
  align-items: center;
  width: 46px;
  padding-left: 4px;
  background: #8a8a8a;
}

.ic-home {
  width: 18px;
  height: 18px;
  color: #222;
}

.arrow {
  width: 0;
  height: 0;
  flex: none;
  border-left: 5px solid transparent;
  border-right: 5px solid transparent;
  border-top: 5px solid #222;
}

.arrow-sm {
  margin-left: 9px;
  margin-bottom: 5px;
  border-left-width: 3px;
  border-right-width: 3px;
  border-top-width: 3px;
}

.doc-tab {
  display: flex;
  align-items: center;
  width: 169px;
  margin-left: 1px;
  padding: 0 7px 0 6px;
  background: #666;
  color: #eee;
}

.ic-tab {
  width: 16px;
  height: 16px;
  color: #eee;
}

.doc-name {
  margin-left: 4px;
}

.doc-x {
  margin-left: auto;
  font-size: 11px;
  color: #fff;
}

.strip {
  height: 6px;
  flex: none;
  background: #666;
}

/* ribbon */
.ribbon {
  display: flex;
  height: 93px;
  flex: none;
  background: #f1f1f1;
  border-bottom: 1px solid #777;
}

.group {
  display: flex;
  flex-direction: column;
  flex: none;
  border-right: 1px solid #b5b5b5;
}

.group-body {
  display: grid;
  grid-template-rows: repeat(3, 25px);
  height: 75px;
}

.group-label {
  display: flex;
  align-items: center;
  height: 17px;
  padding: 1px 3px 0 2px;
  background: #e3e3e3;
  color: #444;
  font-size: 9.8px;
}

.group-label span {
  flex: 1;
  text-align: center;
  white-space: nowrap;
  overflow: hidden;
}

.grip {
  width: 6px;
  height: 10px;
  flex: none;
  background-image: radial-gradient(#666 1px, transparent 1px);
  background-size: 3px 3px;
}

.arrow-lb {
  margin-right: 7px;
  border-left-width: 4px;
  border-right-width: 4px;
  border-top-width: 4px;
}

.g-mode { width: 120px; }
.g-sys { width: 80px; }
.g-comp { width: 120px; }
.g-place { width: 242px; }
.g-ops { width: 120px; }
.g-arr { width: 121px; }
.g-aux { width: 54px; }
.g-dim { width: 52px; }
.g-note { width: 80px; }
.g-diag { width: 241px; }
.g-draw { width: 240px; }
.g-std { width: 121px; }
.g-rest { flex: 1; border-right: 0; }

.modes {
  height: 75px;
}

.mode {
  display: flex;
  align-items: center;
  height: 25px;
  gap: 4px;
  padding-left: 4px;
  font-size: 11.6px;
  line-height: 11px;
  color: #333;
  white-space: nowrap;
}

.mode .ic {
  width: 18px;
  height: 18px;
}

.mode.active {
  background: #4d4d4d;
  color: #f4f4f4;
}

.mode.active .ic {
  color: #f4f4f4;
}

.expand {
  justify-content: center;
}

.chev {
  width: 10px;
  height: 8px;
  fill: none;
  stroke: #444;
  stroke-width: 1;
}

.btn {
  display: flex;
  align-items: center;
  gap: 2px;
  padding-left: 4px;
  height: 25px;
  font-size: 11.6px;
  line-height: 11px;
  color: #333;
  white-space: nowrap;
  overflow: hidden;
}

.btn.off {
  color: #c4c4c4;
}

.cols2 {
  grid-template-columns: 119px 1fr;
}

.g-place .btn {
  padding-left: 5px;
}

.icons i {
  display: flex;
  align-items: center;
  justify-content: center;
}

.cols3 {
  grid-template-columns: repeat(3, 26px);
}

.cols-2 {
  grid-template-columns: repeat(2, 26px);
}

.g-sys .group-body,
.g-aux .group-body,
.g-note .group-body {
  padding-left: 1px;
}

/* work area */
.work {
  display: flex;
  flex: 1;
  min-height: 0;
}

.side {
  width: 26px;
  flex: none;
  background: #c9c9c9;
}

.side-tabs {
  background: #f1f1f1;
}

.side-tabs i {
  display: flex;
  align-items: center;
  justify-content: center;
  height: 25px;
}

.side-tabs i.on {
  background: #4d4d4d;
}

.side-tabs i.on .ic {
  color: #fff;
}

.side-tabs .ic {
  width: 18px;
  height: 18px;
}

.fx {
  font-family: "Liberation Serif", serif;
  font-style: italic;
  font-size: 20px;
  color: #222;
}

.fx small {
  font-size: 14px;
}

.panel {
  display: flex;
  flex-direction: column;
  width: 301px;
  flex: none;
  background: #f1f1f1;
  border-left: 1px solid #666;
  border-right: 1px solid #666;
}

.panel-head {
  display: flex;
  align-items: center;
  justify-content: space-between;
  height: 17px;
  padding: 0 0 0 3px;
  background: #b5b5b5;
  border-bottom: 1px solid #666;
  color: #222;
  font-size: 11.6px;
}

.ic-gear {
  width: 14px;
  height: 14px;
  margin-right: 2px;
  color: #333;
}

.panel-tools {
  display: flex;
  align-items: center;
  height: 26px;
  flex: none;
  border-bottom: 1px solid #111;
}

.panel-tools i {
  display: flex;
  align-items: center;
  justify-content: center;
  width: 26px;
  height: 25px;
}

.panel-tools i.on {
  background: #4d4d4d;
}

.panel-tools i.on .ic {
  color: #fff;
}

.panel-tools .sep {
  width: 27px;
  border-right: 1px solid #888;
}

.panel-tools .wide {
  width: 33px;
}

.panel-tools .arrow {
  margin-left: 1px;
  margin-bottom: 4px;
}

.panel-search {
  display: flex;
  align-items: center;
  height: 26px;
  flex: none;
  border-bottom: 1px solid #111;
}

.panel-search i {
  display: flex;
  align-items: center;
  justify-content: center;
  width: 26px;
  height: 25px;
  background: #e8e8e8;
}

.search-box {
  display: flex;
  align-items: center;
  flex: 1;
  height: 25px;
  padding-left: 7px;
  background: #fff;
  color: #a8a8a8;
}

.tree {
  flex: 1;
}

.row {
  display: flex;
  height: 26px;
  font-size: 11.8px;
  border-bottom: 1px solid #e0e0e0;
}

.row.first {
  height: 28px;
}

.cols {
  display: flex;
  align-items: center;
  gap: 8px;
  width: 52px;
  padding: 1px 0 0 5px;
  background: #e6e6e6;
}

.cols.right {
  padding-left: 33px;
}

.elem {
  font-size: 19px;
  color: #333;
  line-height: 20px;
}

.cell {
  display: flex;
  align-items: center;
  flex: 1;
  min-width: 0;
  padding: 1px 0 0 26px;
  color: #333;
  white-space: nowrap;
  overflow: hidden;
}

.lvl0 {
  padding-left: 14px;
}

.tw {
  width: 0;
  height: 0;
  flex: none;
  margin-right: 4px;
  border-top: 3px solid transparent;
  border-bottom: 3px solid transparent;
  border-left: 4px solid #444;
}

.tw.open {
  border-left: 3.5px solid transparent;
  border-right: 3.5px solid transparent;
  border-top: 5px solid #222;
  border-bottom: 0;
}

.ic-t {
  width: 16px;
  height: 16px;
  margin-right: 2px;
}

.plus {
  margin-right: 1px;
}

.panel-tabs {
  display: flex;
  height: 27px;
  flex: none;
  background: #f1f1f1;
  border-top: 2px solid #aaa;
  border-bottom: 2px solid #999;
}

.panel-tabs i {
  display: flex;
  align-items: center;
  justify-content: center;
  width: 26px;
}

.panel-tabs i.on {
  background: #4d4d4d;
}

.panel-tabs i.on .ic {
  color: #fff;
}

.panel-lower {
  height: 193px;
  flex: none;
}

/* 3D view */
.view {
  position: relative;
  flex: 1;
  min-width: 0;
  background: linear-gradient(178deg, #e0e0e0 0%, #c9c9cc 45%, #adacb4 100%);
}

.scene {
  position: absolute;
  left: 0;
  top: 0;
  width: 100%;
  height: 100%;
}

.float-bar {
  position: absolute;
  z-index: 2;
  left: 555px;
  top: -1px;
  display: flex;
  height: 27px;
  width: 588px;
  background: #f1f1f1;
  border: 1px solid #777;
}

.float-grip {
  width: 15px;
  background-color: #e3e3e3;
  background-image: radial-gradient(#555 .8px, transparent 1px);
  background-size: 3px 3px;
  background-position: 1px 2px;
  background-repeat: repeat-x;
  border-right: 1px solid #777;
}

.seg {
  display: flex;
  align-items: center;
  padding: 0 2px;
  border-right: 1px solid #777;
}

.seg i {
  display: flex;
  align-items: center;
  justify-content: center;
  width: 26px;
  height: 25px;
}

.seg i.on {
  background: #4d4d4d;
}

.seg i.on .ic {
  color: #fff;
}

.seg .arrow {
  margin: 0 5px;
}

.seg-on {
  background: #4d4d4d;
}

.seg-on .ic {
  color: #fff;
}

.seg-on .arrow {
  border-top-color: #fff;
}

.seg-end {
  border-right: 0;
}

/* board */
.board {
  fill: #04632f;
  stroke: #0a1a10;
  stroke-width: 1;
}

.board-side path {
  fill: #0a9650;
  stroke: #0a1a10;
  stroke-width: .8;
}

.vias circle {
  r: 1.4px;
  fill: none;
  stroke: #08190f;
  stroke-width: .9;
}

.vias .big {
  r: 2.6px;
}

.led-end { fill: #dededa; stroke: #222; stroke-width: .6; }
.led-mid { fill: #b9b8aa; stroke: #222; stroke-width: .6; }
.led-top { fill: #e9e6c4; stroke: none; }
.smd-mid { fill: #2a2a2a; stroke: #111; stroke-width: .6; }

.pins-comb path {
  fill: none;
  stroke: #111;
  stroke-width: 7;
  stroke-dasharray: 2.3 1;
}

.pins-comb.top path {
  stroke: #d8d8d0;
  stroke-width: 6;
  stroke-dasharray: 1.1 2.2;
}

.qfp { fill: #2b2b2b; stroke: #111; stroke-width: 1.5; }
.qfp-dot { fill: #ddd; }

.mod { fill: #131313; stroke: #050505; stroke-width: 1; }
.mod-line { fill: none; stroke: #2a2a2a; stroke-width: 1; }
.mod-hole { fill: #0c0c0c; stroke: #3a3a3a; stroke-width: 1.2; }
.mod-gold { fill: none; stroke: #a99c5e; stroke-width: 3; }

.soic { fill: #2b2b2b; stroke: #0c0c0c; stroke-width: 1; }
.soic-pins { fill: none; stroke: #111; stroke-width: 3.5; }
.soic-pins.inner { stroke: #dcdcd4; stroke-width: 2; }
.soic-pins.small { stroke: #d0d0c8; stroke-width: 2; }

.xt-tab { fill: #9c9c94; stroke: #222; stroke-width: .6; }
.xt-base { fill: #141414; stroke: #000; stroke-width: 1; }
.xt-a { fill: #dededa; stroke: #333; stroke-width: 1; }
.xt-b { fill: #c2c2bc; stroke: #555; stroke-width: 1; }
.xt-c { fill: #a9a7a1; stroke: #222; stroke-width: 1; }

.tan { fill: #a99a84; stroke: #222; stroke-width: .6; }
.sw { fill: #141414; stroke: #000; }
.sw-top { fill: #a6abc0; }
.sw-dot { fill: #151515; }
.sw-ring { fill: #141414; }
.sw-knob { fill: #444; }

.usb { fill: #e6e6e6; stroke: #222; stroke-width: .9; }
.usb-ear { fill: #d0d0d0; stroke: #222; stroke-width: .8; }
.usb-rim { fill: #c9c9c9; stroke: #222; stroke-width: .9; }
.usb-in { fill: #0d0d0d; stroke: #444; }
.usb-pin { fill: none; stroke: #333; stroke-width: 1; stroke-dasharray: 2 2; }
.usb-edge { fill: #ddd; stroke: #222; stroke-width: .6; }

.red { fill: #ee0000; stroke: #200; stroke-width: .9; }
.red.lt { fill: #ff0000; }

/* axes triad */
.triad {
  filter: blur(.4px);
}

.ax-y { stroke: #5dc468; stroke-width: 4; fill: none; }
.ax-yh { fill: #7fd488; stroke: #4a9f58; }
.ax-x { stroke: #d86a6a; stroke-width: 3; fill: none; }
.ax-xh { fill: #e06060; stroke: #b55; }
.ax-z { stroke: #4f5f6e; stroke-width: 4; fill: none; }
.ax-o { fill: #e6e070; stroke: #8a8a50; }
.ax-zb { fill: #3a6fc0; stroke: #46648a; }
.ax-t { font-family: Roboto, sans-serif; font-size: 11px; }
.tx { fill: #e05a5a; }
.ty { fill: #58b070; }
.tz { fill: #5080e0; }

/* system tray */
.taskbar {
  display: flex;
  height: 8px;
  flex: none;
  overflow: hidden;
  background: #1c2e3b;
  color: #f0f0f0;
  line-height: 1;
}

.task-item {
  width: 48px;
  margin-left: 539px;
  background: #2f4250;
}

.clock {
  margin-left: auto;
  margin-right: 72px;
  padding-top: 6px;
  font-size: 12px;
}
```
